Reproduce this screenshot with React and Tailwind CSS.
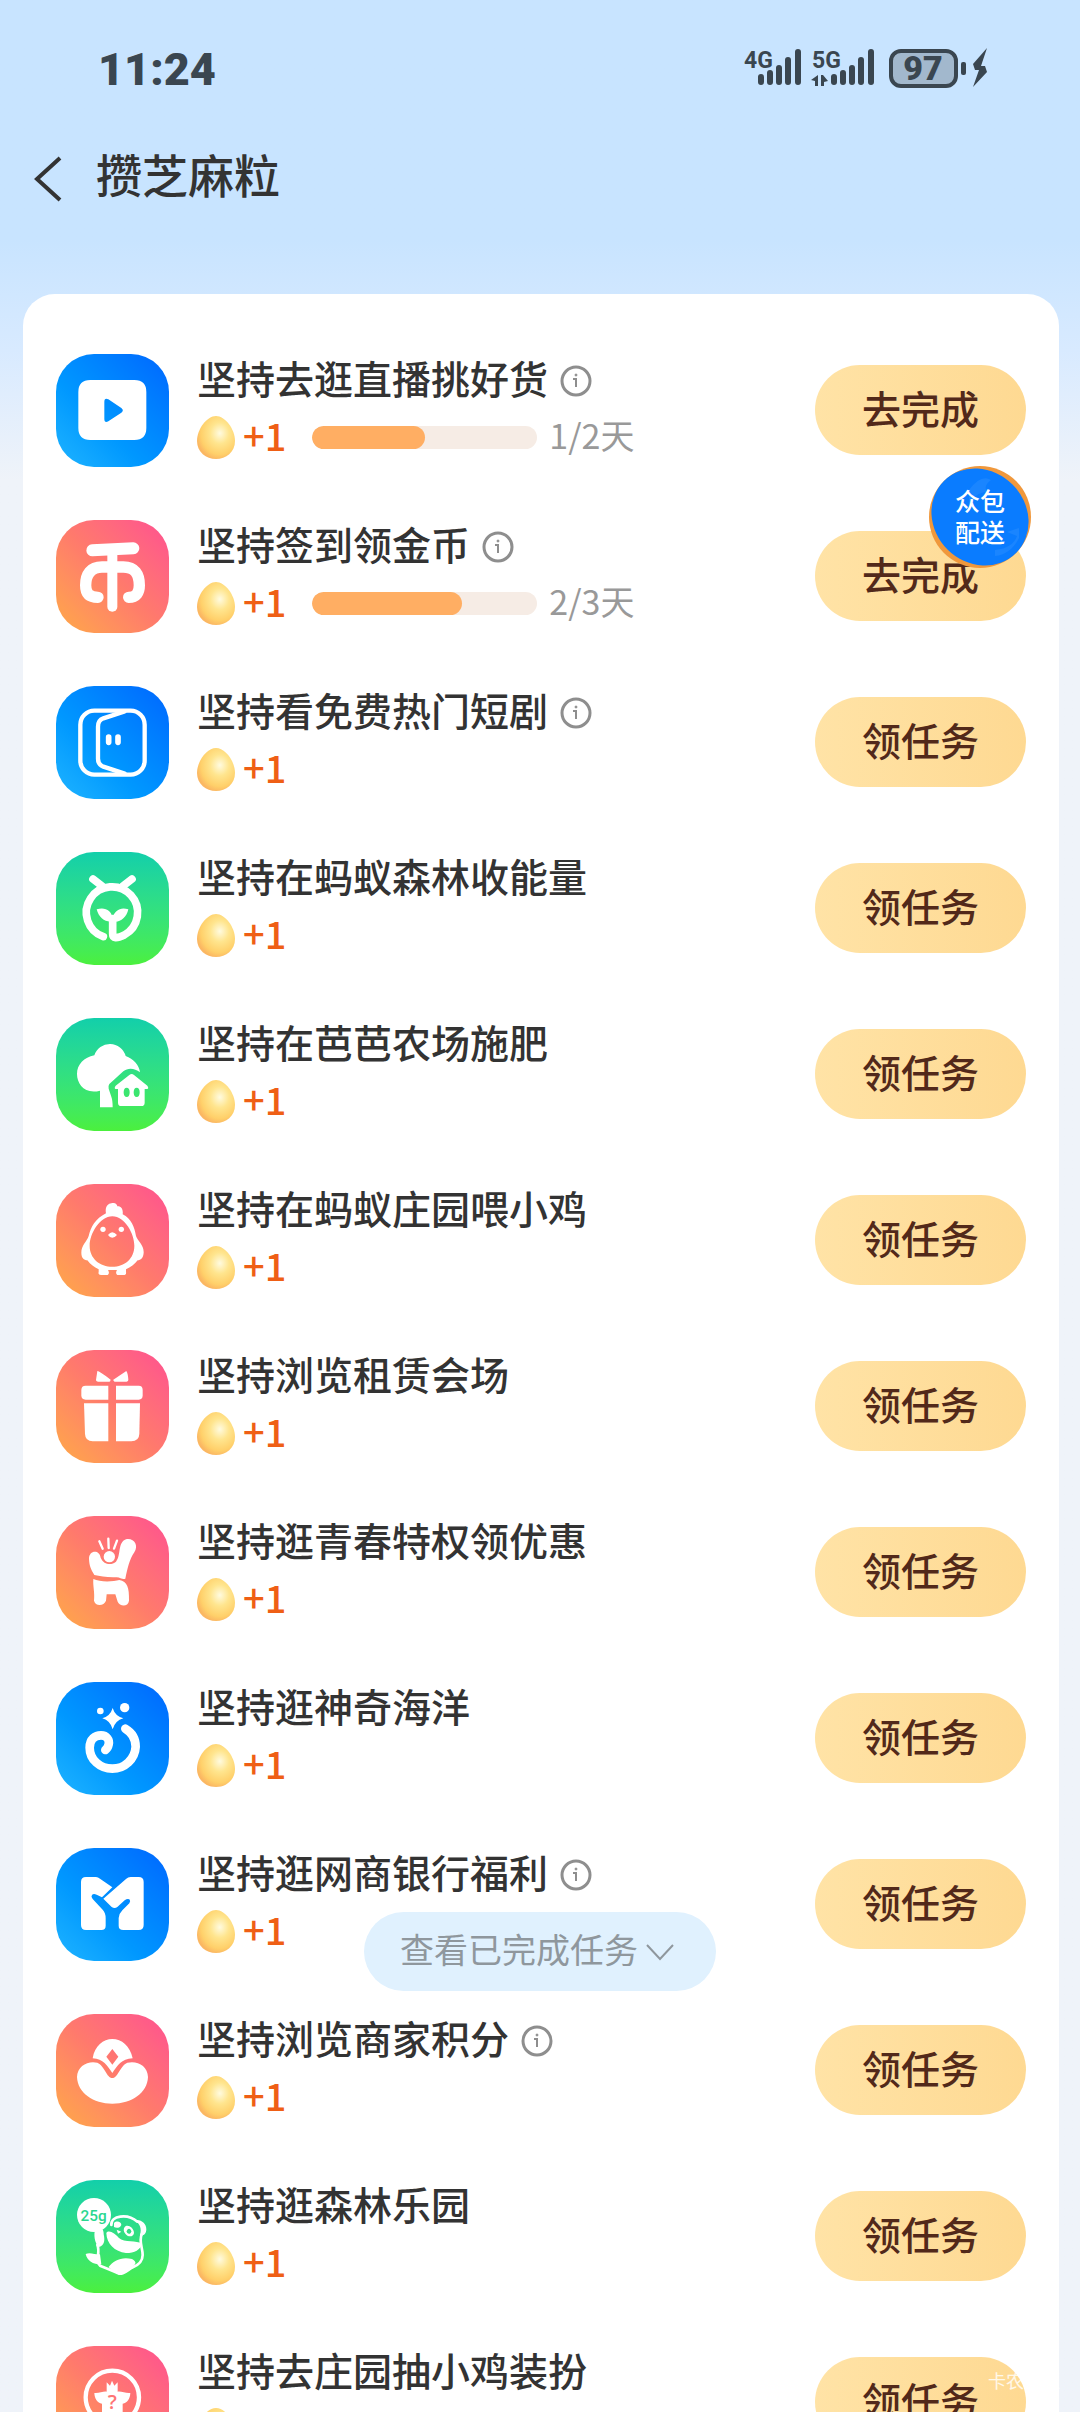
import { useId } from "react";

const tasks = [
  { title: "坚持去逛直播挑好货", icon: "live", tone: "blue", info: true, done: 1, total: 2 },
  { title: "坚持签到领金币", icon: "coin", tone: "red", info: true, done: 2, total: 3 },
  { title: "坚持看免费热门短剧", icon: "drama", tone: "blue", info: true },
  { title: "坚持在蚂蚁森林收能量", icon: "forest", tone: "green" },
  { title: "坚持在芭芭农场施肥", icon: "farm", tone: "green" },
  { title: "坚持在蚂蚁庄园喂小鸡", icon: "chick", tone: "red" },
  { title: "坚持浏览租赁会场", icon: "gift", tone: "red" },
  { title: "坚持逛青春特权领优惠", icon: "youth", tone: "red" },
  { title: "坚持逛神奇海洋", icon: "ocean", tone: "blue" },
  { title: "坚持逛网商银行福利", icon: "bank", tone: "blue", info: true },
  { title: "坚持浏览商家积分", icon: "ingot", tone: "red", info: true },
  { title: "坚持逛森林乐园", icon: "panda", tone: "green" },
  { title: "坚持去庄园抽小鸡装扮", icon: "dress", tone: "red" },
];

const tones = {
  blue: "bg-linear-to-tr from-[#1eb4ff] to-[#0066ff]",
  red: "bg-linear-to-tr from-[#ffa944] via-[#ff7a6c] to-[#ff4f90]",
  green: "bg-linear-to-t from-[#4bf03c] to-[#12cfaa]",
};

const stroke = {
  fill: "none",
  stroke: "white",
  strokeLinecap: "round",
  strokeLinejoin: "round",
};

const glyphs = {
  live: (
    <path
      fillRule="evenodd"
      d="M103 78H235Q271 78 271 114V222Q271 258 235 258H103Q67 258 67 222V114Q67 78 103 78ZM145 144V194Q145 208 157 202L196 176Q205 169 196 162L157 136Q145 130 145 144Z"
    />
  ),
  coin: (
    <g {...stroke} strokeWidth="34">
      <path d="M109 91L232 85" strokeWidth="36" />
      <path d="M169 95V260" strokeWidth="30" />
      <path d="M126 232C98 232 89 218 89 196C89 162 104 141 138 141H202C236 141 250 162 250 196C250 218 241 232 218 232" />
    </g>
  ),
  drama: (
    <g {...stroke} strokeWidth="13">
      <rect x="73" y="74" width="193" height="192" rx="42" />
      <path d="M206 76L142 97Q126 103 126 122V218Q126 236 142 242L206 263" />
      <path d="M158 153V169M186 153V169" strokeWidth="17" />
    </g>
  ),
  forest: (
    <g>
      <g {...stroke} strokeWidth="23">
        <path d="M142 254A77 77 0 1 1 205 249Q170 266 170 246V200" />
        <path d="M111 81L139 103M228 81L200 103" />
      </g>
      <path d="M122 172C148 164 166 176 169 196C178 176 192 164 217 172C212 196 194 210 177 209H163C144 208 128 196 122 172Z" />
    </g>
  ),
  farm: (
    <g>
      <path d="M115 112A49 49 0 0 1 209 114C232 122 250 142 252 163C236 150 216 148 202 160L160 198Q156 204 158 212L166 236Q170 246 170 268H132V218C86 230 63 198 63 168C63 140 84 118 115 112Z" />
      <path
        fillRule="evenodd"
        d="M220 171Q227 165 234 171L274 203Q281 213 270 213H266V254Q266 264 256 264H196Q186 264 186 254V213H182Q172 213 179 203ZM203 223A9 14 0 1 0 221 223A9 14 0 1 0 203 223ZM233 223A9 14 0 1 0 251 223A9 14 0 1 0 233 223Z"
      />
    </g>
  ),
  chick: (
    <g>
      <path
        fillRule="evenodd"
        d="M150 88C146 70 156 58 166 58C178 54 184 62 184 67C196 66 202 76 200 91C226 104 236 130 240 156C246 172 264 184 263 206C262 222 254 228 245 229C236 240 224 250 210 256V264Q212 273 202 273H184Q177 268 183 258H156Q162 268 155 273H135Q125 273 128 264V256C114 250 104 242 94 229C84 228 76 222 76 206C76 184 93 172 98 156C104 130 118 104 150 88ZM169 97C131 97 101 150 101 185C101 224 132 248 169 248C206 248 235 224 235 185C235 150 207 97 169 97Z"
      />
      <circle cx="141" cy="136" r="8" />
      <circle cx="196" cy="136" r="8" />
      <path d="M156 153Q168 137 183 153Q168 170 156 153Z" />
    </g>
  ),
  gift: (
    <g>
      <path d="M124 63Q130 63 164 89Q163 95 160 95H126Q119 93 120 90Z" />
      <path d="M211 63Q216 70 217 90Q217 93 212 95H176Q171 92 172 89Z" />
      <path d="M89 107H157V149H89Q76 149 76 136V120Q76 107 89 107Z" />
      <path d="M180 107H248Q260 107 260 120V136Q260 149 248 149H180Z" />
      <path d="M84 160H157V274H110Q88 274 87 252Z" />
      <path d="M180 160H252L250 252Q249 274 226 274H180Z" />
    </g>
  ),
  youth: (
    <g transform="translate(-48 -561)">
      <path d="M147 690C146 664 178 660 182 686C192 708 214 710 228 698C244 680 232 640 258 631C282 626 297 650 283 670C268 692 262 720 256 749C245 753 240 742 225 745C200 746 180 740 163 738C152 720 148 710 147 690Z" />
      <path d="M160 750C180 760 220 758 238 753C262 758 268 775 267 815C264 836 238 832 233 818L226 796H200L198 815C192 832 165 832 162 815C165 790 158 770 160 750Z" />
      <circle cx="208" cy="683" r="17" />
      <path {...stroke} strokeWidth="7" d="M178 637L188 659M205 629L206 657M231 635L222 659" />
    </g>
  ),
  ocean: (
    <g transform="translate(-48 -39)">
      <path
        {...stroke}
        strokeWidth="26"
        d="M256 179C278 192 287 212 287 233C285 270 254 299 217 299C180 299 149 272 149 236C149 210 166 199 183 199C200 199 209 212 206 226C204 236 200 240 196 243"
      />
      <path d="M218 117Q225 141 250 148Q225 155 218 181Q211 155 187 148Q211 141 218 117Z" />
      <circle cx="181" cy="126" r="10" />
      <circle cx="254" cy="116" r="14" />
    </g>
  ),
  bank: (
    <g transform="translate(-48 -537)">
      <path d="M138 624H168Q174 624 180 629L217 655L186 685L170 677Q160 673 156 678Q152 683 158 690L188 722Q197 732 197 747V770Q197 783 184 783H138Q123 783 123 768V639Q123 624 138 624Z" />
      <path d="M190 689L258 630Q264 624 272 624H296Q311 624 311 639V768Q311 783 296 783H250Q236 783 236 770V747Q237 734 247 724L268 703Q273 696 268 691Q262 688 254 694L232 714Q224 720 215 714Z" />
    </g>
  ),
  ingot: (
    <g transform="translate(-48 -45)">
      <path d="M111 234C112 200 145 184 172 191C194 200 200 237 217 237C234 237 240 200 262 191C292 184 323 200 324 234C322 282 275 314 217 314C160 314 113 282 111 234Z" />
      <path
        fillRule="evenodd"
        d="M158 178C164 140 190 120 217 120C245 120 270 140 278 178C244 180 232 200 217 222C202 200 190 180 158 178ZM217 150L199 173L217 197L235 173Z"
      />
    </g>
  ),
  panda: (
    <g transform="translate(-48 -543)">
      <circle cx="162" cy="648" r="51" />
      <text
        x="161"
        y="666"
        textAnchor="middle"
        className="fill-[#2bd790] font-[Roboto] text-[46px] font-medium"
      >
        25g
      </text>
      <path
        {...stroke}
        strokeWidth="8"
        d="M214 678C212 650 262 642 292 668M305 706C296 728 308 746 308 768C308 790 292 800 276 806C262 814 250 826 238 824C220 816 200 808 180 800C164 788 182 760 172 738"
      />
      <path d="M286 664C302 660 320 674 319 692C318 706 308 712 300 708C306 690 300 676 286 664Z" />
      <path d="M199 702C206 690 226 704 236 716C254 732 290 722 305 734C302 752 284 762 258 762C224 758 200 735 199 702Z" />
      <path d="M166 690C178 680 192 688 191 706C196 726 192 742 176 744C164 732 160 706 166 690Z" />
      <path d="M206 804C220 784 246 772 276 780C290 788 290 795 276 804C262 814 248 826 236 826C224 822 214 814 206 804Z" />
      <path d="M137 765C150 758 168 768 180 766L184 796C158 796 142 786 137 765Z" />
      <path
        fillRule="evenodd"
        d="M254 684C262 674 282 686 282 702C280 716 262 714 256 704C250 698 250 690 254 684ZM262 692A7 7 0 1 0 272 702A7 7 0 1 0 262 692Z"
      />
      <path d="M222 672C230 664 244 668 244 678C240 688 228 688 222 684Z" />
      <path d="M230 692L244 698L234 704Z" />
    </g>
  ),
  dress: (
    <g transform="translate(-48 -1041)">
      <circle {...stroke} strokeWidth="13" cx="217" cy="1195" r="80" />
      <path d="M163 1182C176 1184 190 1176 200 1178V1150L210 1160L216 1145L223 1160L233 1150V1178C244 1176 258 1184 271 1182C270 1200 262 1212 248 1214V1260H186V1214C172 1212 164 1200 163 1182Z" />
      <text
        x="217"
        y="1229"
        textAnchor="middle"
        className="fill-[#ff7574] font-['Open_Sans'] text-[60px] font-semibold"
      >
        ?
      </text>
    </g>
  ),
};

function Egg() {
  const id = useId();
  return (
    <svg viewBox="0 0 38 43" className="h-[43px] w-[38px]" aria-hidden="true">
      <defs>
        <radialGradient id={id} cx="0.6" cy="0.4" r="0.62">
          <stop offset="0" stopColor="#fffbe0" />
          <stop offset="0.4" stopColor="#ffe58e" />
          <stop offset="0.8" stopColor="#ffd06a" />
          <stop offset="1" stopColor="#fbb762" />
        </radialGradient>
      </defs>
      <path
        fill={`url(#${id})`}
        d="M19 0C28 0 38 13 38 25C38 36 29 43 19 43C9 43 0 36 0 25C0 13 10 0 19 0Z"
      />
    </svg>
  );
}

function InfoButton() {
  return (
    <button type="button" aria-label="说明" className="mt-1 ml-3 cursor-pointer">
      <svg viewBox="0 0 32 32" className="size-8" fill="none" stroke="#8e8e8e">
        <circle cx="16" cy="16" r="14" strokeWidth="3" />
        <path d="M13 14H16V22" strokeWidth="2" />
        <circle cx="16" cy="10" r="1" strokeWidth="1" fill="#8e8e8e" />
      </svg>
    </button>
  );
}

function TaskRow({ task }) {
  return (
    <li className="flex h-[166px] items-center">
      <div className={`size-[113px] shrink-0 overflow-hidden rounded-[38px] ${tones[task.tone]}`}>
        <svg viewBox="0 0 339 339" fill="white" aria-hidden="true">
          {glyphs[task.icon]}
        </svg>
      </div>

      <div className="ml-7 flex-1">
        <div className="flex h-[54px] items-center">
          <h2 className="pb-1 text-[39px] leading-[50px] font-medium whitespace-nowrap text-[#333]">
            {task.title}
          </h2>
          {task.info && <InfoButton />}
        </div>
        <div className="flex h-[62px] items-center">
          <Egg />
          <span className="ml-2 pb-1 text-[38px] leading-none font-medium text-[#ef5f15]">+1</span>
          {task.total && (
            <>
              <div className="ml-[26px] h-[23px] w-[225px] overflow-hidden rounded-full bg-[#f6ece5]">
                <div
                  className="h-full rounded-full bg-[#ffae63]"
                  style={{ width: `${(task.done / task.total) * 100}%` }}
                />
              </div>
              <span className="ml-3 pb-1 text-[34px] leading-none text-[#999]">
                {task.done}/{task.total}天
              </span>
            </>
          )}
        </div>
      </div>

      <button
        type="button"
        className="h-[90px] w-[211px] shrink-0 cursor-pointer rounded-full bg-linear-to-r from-[#ffe3a6] to-[#fed992] pb-1.5 text-[39px] leading-none font-medium text-[#52291a]"
      >
        {task.total ? "去完成" : "领任务"}
      </button>
    </li>
  );
}

function StatusBar() {
  return (
    <div className="flex h-[136px] items-center justify-between pr-[92px] pl-[98px]">
      <span className="pt-0.5 font-[Roboto] text-[45px] leading-none font-black text-[#3a4650]">
        11:24
      </span>
      <svg
        viewBox="0 0 244 40"
        className="h-10 w-[244px] overflow-visible"
        fill="#3a4650"
        aria-hidden="true"
      >
        <g className="font-[Roboto] text-[23px] font-bold">
          <text x="0" y="20">4G</text>
          <text x="68" y="20">5G</text>
        </g>
        <g stroke="#3a4650" strokeWidth="6" strokeLinecap="round">
          <path d="M17 29V34M26 25V34M35 20V34M44 12V34M54 4V34" />
          <path d="M90 29V34M99 25V34M108 20V34M117 12V34M127 4V34" />
        </g>
        <path d="M67 32L74 27V38H71V33ZM77 27H79L84 33L80 34V38H77Z" />
        <rect x="147" y="3" width="65" height="35" rx="10" fill="#a2b8cd" stroke="#3a4650" strokeWidth="4" />
        <text
          x="179"
          y="32"
          textAnchor="middle"
          className="font-[Roboto] text-[34px] font-black"
        >
          97
        </text>
        <rect x="217" y="14" width="5" height="13" rx="2" />
        <path d="M243 0L229 16L231 22H235L229 39L243 24L241 18H237Z" />
      </svg>
    </div>
  );
}

function App() {
  return (
    <div className="relative h-screen overflow-hidden bg-[#eff3f9] font-['Noto_Sans_CJK_SC',sans-serif]">
      <div className="bg-linear-to-b from-[#c8e4ff] from-[240px] via-[#d8eaff] via-[350px] to-[#eff3f9] to-[480px]">
        <StatusBar />

        <header className="flex h-[158px] items-start pl-8">
          <button type="button" aria-label="返回" className="mt-5 cursor-pointer">
            <svg
              viewBox="0 0 30 46"
              className="h-[46px] w-[30px]"
              fill="none"
              stroke="#333"
              strokeWidth="4"
            >
              <path d="M28 2L5 23L28 44" />
            </svg>
          </button>
          <h1 className="ml-[34px] text-[46px] leading-[74px] font-medium text-[#333]">攒芝麻粒</h1>
        </header>

        <main className="mr-[21px] ml-[23px] rounded-t-[32px] bg-white px-[33px] pt-[33px]">
          <ul>
            {tasks.map((task) => (
              <TaskRow key={task.title} task={task} />
            ))}
          </ul>
        </main>
      </div>

      <a
        href="#delivery"
        className="absolute top-[466px] right-[49px] flex size-[102px] items-center justify-center"
      >
        <svg viewBox="0 0 102 102" className="absolute inset-0" aria-hidden="true">
          <circle cx="51" cy="51" r="51" fill="#f0983c" />
          <ellipse cx="51" cy="51" rx="51" ry="46" fill="#0a7cff" transform="rotate(45 51 51)" />
          <path
            d="M40 24Q52 8 62 14Q54 20 58 26Q46 26 40 40ZM66 84Q84 82 88 70L78 66L90 62V72Q82 88 66 90Z"
            fill="#1a85ff"
          />
        </svg>
        <span className="relative w-[52px] pb-0.5 text-center text-[25px] leading-[31px] font-medium text-white">
          众包配送
        </span>
      </a>

      <button
        type="button"
        className="absolute bottom-[421px] left-1/2 flex h-[79px] w-[352px] -translate-x-1/2 cursor-pointer items-center rounded-full bg-[#e0f1fe] pb-1.5 pl-9 text-[34px] leading-none text-[#8f979d]"
      >
        查看已完成任务
        <svg
          viewBox="0 0 28 18"
          className="mt-2 ml-2 h-[18px] w-7"
          fill="none"
          stroke="currentColor"
          strokeWidth="2"
        >
          <path d="M1 1L14 15L27 1" />
        </svg>
      </button>

      <span className="absolute right-5 bottom-5 text-[18px] leading-6 text-white/80">
        卡农社区
      </span>
    </div>
  );
}

export default App;
